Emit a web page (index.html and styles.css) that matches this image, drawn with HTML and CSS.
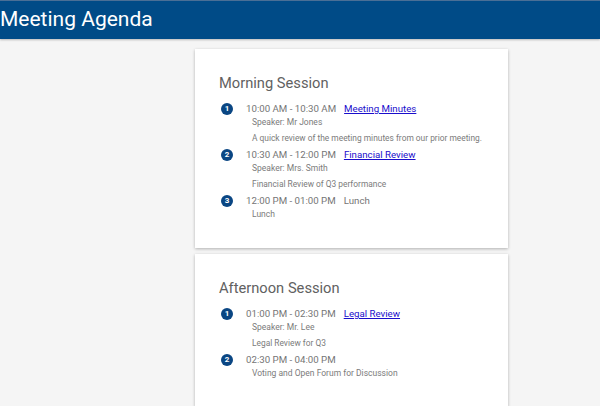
FILE: index.html
```html
<!DOCTYPE html>
<html>
<head>
<meta charset="utf-8">
<link rel="stylesheet" href="styles.css">
</head>
<body>
<header class="topbar">Meeting Agenda</header>
<main class="content">
  <section class="card">
    <h2 class="session-title">Morning Session</h2>
    <ol class="agenda">
      <li class="item">
        <span class="num">1</span>
        <div class="body">
          <div class="headline"><span class="time">10:00 AM - 10:30 AM</span><a class="topic" href="#">Meeting Minutes</a></div>
          <div class="speaker">Speaker: Mr Jones</div>
          <div class="desc">A quick review of the meeting minutes from our prior meeting.</div>
        </div>
      </li>
      <li class="item">
        <span class="num">2</span>
        <div class="body">
          <div class="headline"><span class="time">10:30 AM - 12:00 PM</span><a class="topic" href="#">Financial Review</a></div>
          <div class="speaker">Speaker: Mrs. Smith</div>
          <div class="desc">Financial Review of Q3 performance</div>
        </div>
      </li>
      <li class="item">
        <span class="num">3</span>
        <div class="body">
          <div class="headline"><span class="time">12:00 PM - 01:00 PM</span><span class="topic plain">Lunch</span></div>
          <div class="speaker">Lunch</div>
        </div>
      </li>
    </ol>
  </section>
  <section class="card">
    <h2 class="session-title">Afternoon Session</h2>
    <ol class="agenda">
      <li class="item">
        <span class="num">1</span>
        <div class="body">
          <div class="headline"><span class="time">01:00 PM - 02:30 PM</span><a class="topic" href="#">Legal Review</a></div>
          <div class="speaker">Speaker: Mr. Lee</div>
          <div class="desc">Legal Review for Q3</div>
        </div>
      </li>
      <li class="item">
        <span class="num">2</span>
        <div class="body">
          <div class="headline"><span class="time">02:30 PM - 04:00 PM</span></div>
          <div class="speaker">Voting and Open Forum for Discussion</div>
        </div>
      </li>
    </ol>
  </section>
</main>
</body>
</html>
```
FILE: styles.css
```css
html, body {
  margin: 0;
  padding: 0;
}
body {
  background: #f5f5f5;
  font-family: Roboto, "Liberation Sans", sans-serif;
  color: #757575;
}
.topbar {
  background: #004b87;
  border-top: 1px solid #4a6f96;
  height: 38px;
  line-height: 36px;
  color: #ffffff;
  font-size: 21px;
  box-shadow: 0 1px 2px rgba(0,0,0,0.25);
}
.content {
  padding: 10px 0 0 195px;
}
.card {
  width: 277px;
  background: #ffffff;
  padding: 25px 12px 24px 24px;
  margin-bottom: 6px;
  box-shadow: 0 1px 3px rgba(0,0,0,0.28);
}
.session-title {
  margin: 0 0 10px 0;
  font-size: 14.7px;
  line-height: 18px;
  font-weight: 400;
  color: #616161;
}
.agenda {
  list-style: none;
  margin: 0;
  padding: 0;
}
.item {
  display: flex;
  align-items: flex-start;
  margin-bottom: 3px;
}
.num {
  flex: none;
  width: 12px;
  height: 12px;
  margin: 1px 13px 0 2px;
  border-radius: 50%;
  background: #0a4683;
  color: #ffffff;
  font-size: 8px;
  font-weight: 700;
  line-height: 12px;
  text-align: center;
}
.headline {
  font-size: 9.7px;
  line-height: 14px;
  color: #757575;
  white-space: nowrap;
}
.time {
  margin-right: 8px;
}
.topic {
  color: #1a0dcc;
  text-decoration: underline;
}
.topic.plain {
  color: #757575;
  text-decoration: none;
}
.speaker {
  font-size: 8.5px;
  line-height: 13px;
  padding-left: 6px;
  color: #7b7b7b;
  white-space: nowrap;
}
.desc {
  margin-top: 2px;
  font-size: 8.4px;
  line-height: 14px;
  padding-left: 6px;
  color: #7b7b7b;
  white-space: nowrap;
}
```
